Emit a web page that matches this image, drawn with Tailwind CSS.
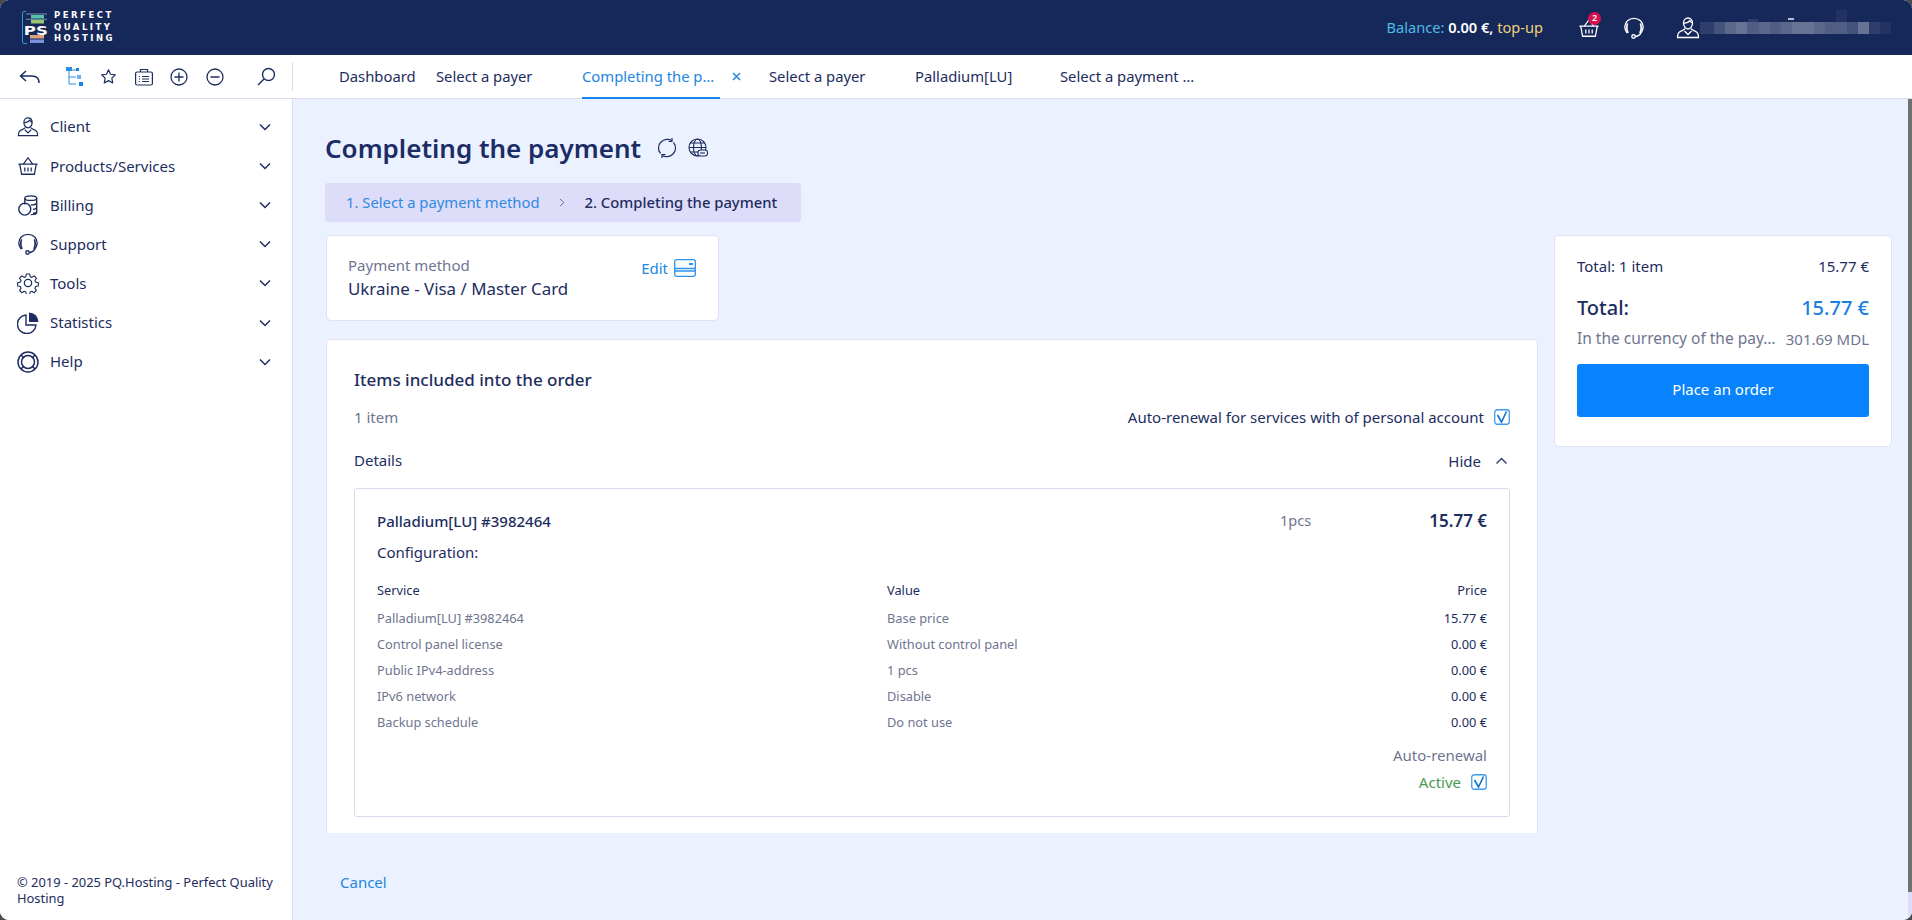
<!DOCTYPE html>
<html lang="en">
<head>
  <meta charset="UTF-8">
  <title>Completing the payment</title>
  <script src="https://cdn.jsdelivr.net/npm/@tailwindcss/browser@4"></script>
</head>
<body class="h-screen overflow-hidden bg-[#4a4a4a] font-['Noto_Sans',sans-serif] text-[15px] text-[#1d2d60]">
  <svg class="hidden">
    <symbol id="user" viewBox="0 0 24 24" fill="none" stroke="currentColor" stroke-width="1.300">
      <path d="M7.500 7c0-3 2-5 4.500-5s4.500 2 4.500 5-2 6-4.500 6-4.500-3-4.500-6z"/><path d="M7.500 7c3 .5 5-.5 6.500-2.500 .5 1 1.500 2 2.500 2.500"/>
      <path d="M9 12.500c-.5 2-5 2-6.500 4.500-.7 1.300-1 3-1 4.500h21c0-1.500-.3-3.200-1-4.500-1.500-2.500-6-2.500-6.500-4.500"/><path d="M8.500 15l3.500 3.500 3.500-3.500"/>
    </symbol>
    <symbol id="basket" viewBox="0 0 24 24" fill="none" stroke="currentColor" stroke-width="1.400" stroke-linejoin="round">
      <path d="M1.500 10h21M3 10l2 11h14l2-11"/><path d="M7 10l5-7 5 7"/><path d="M8.500 13.500v4.500M12 13.500v4.500M15.500 13.500v4.500"/>
    </symbol>
    <symbol id="headset" viewBox="0 0 24 24" fill="none" stroke="currentColor" stroke-width="1.500">
      <path d="M4.500 17.500C2.500 15 2 13 2 11 2 5.500 6.500 1.500 12 1.500S22 5.500 22 11c0 2-.5 4-2.500 6.500"/>
      <path d="M5 7c-1.200 3-1 7 .5 10.500M19 7c1.200 3 1 7-.5 10.500" stroke-width="1.800"/>
      <path d="M19.500 17.500c-1.500 2.500-3.500 3.500-6 3.800"/><circle cx="11.500" cy="21.300" r="1.900"/>
    </symbol>
    <symbol id="chev" viewBox="0 0 12 8" fill="none" stroke="currentColor" stroke-width="1.500"><path d="M1 1.500l5 5 5-5"/></symbol>
    <symbol id="check" viewBox="0 0 16 16" fill="none"><rect x=".75" y=".75" width="14.500" height="14.500" rx="2.500" stroke="#3d9bef" stroke-width="1.300"/><path d="M3.500 6l4 7 5-10.500" stroke="#1173c9" stroke-width="1.600"/></symbol>
  </svg>

  <div class="flex h-full flex-col overflow-hidden rounded-[9px] bg-white">
    <header class="flex h-[55px] shrink-0 items-center bg-[#16285a]">
      <div class="ml-[22px] flex items-center gap-[6px]">
        <svg class="h-[33px] w-[26px]" viewBox="0 0 26 33" fill="none">
          <path d="M4 .5H2Q.5.5.5 2v29q0 1.500 1.500 1.500h3" stroke="#2f9cc4"/>
          <rect x="4" y="2.500" width="21" height="1" fill="#7b8dac"/>
          <rect x="9" y="4" width="13" height="3.500" fill="#52c3a5"/>
          <rect x="9" y="9" width="13" height="3.500" fill="#96c66d"/>
          <rect x="4" y="7.800" width="21" height="1" fill="#7b8dac"/>
          <text x="1.800" y="24" font-family="DejaVu Sans" font-weight="700" font-size="13" textLength="24" lengthAdjust="spacingAndGlyphs" fill="#fff">PS</text>
          <rect x="8" y="24" width="14" height="3.500" fill="#dda27d"/>
          <rect x="8" y="28.500" width="14" height="3.500" fill="#7a90dd"/>
        </svg>
        <div class="font-['DejaVu_Sans',sans-serif] text-[8.500px] leading-[11.500px] font-bold tracking-[2.500px] text-white uppercase">
          <div>Perfect</div><div>Quality</div><div>Hosting</div>
        </div>
      </div>
      <div class="ml-auto flex items-center">
        <div class="text-[14.600px]"><span class="text-[#4cbde9]">Balance:</span> <span class="font-semibold text-white">0.00 €,</span> <span class="text-[#f0d277]">top-up</span></div>
        <div class="relative ml-[35px] text-white">
          <svg class="h-[22px] w-[22px]"><use href="#basket"/></svg>
          <span class="absolute top-[-5px] left-[10px] flex h-[13px] w-[13px] items-center justify-center rounded-full bg-[#d6104f] text-[9px] font-semibold text-white">2</span>
        </div>
        <svg class="ml-[23px] h-[22px] w-[22px] text-white"><use href="#headset"/></svg>
        <svg class="ml-[31px] h-[24px] w-[24px] text-white"><use href="#user"/></svg>
        <div class="relative mr-[16px] flex h-[12px] w-[196px]">
          <div class="w-[14px] bg-white/10"></div><div class="w-[11px] bg-white/20"></div><div class="w-[11px] bg-white/30"></div><div class="w-[11px] bg-white/35"></div><div class="w-[12px] bg-white/25"></div><div class="w-[11px] bg-white/30"></div><div class="w-[11px] bg-white/25"></div><div class="w-[11px] bg-white/30"></div><div class="w-[11px] bg-white/35"></div><div class="w-[11px] bg-white/35"></div><div class="w-[11px] bg-white/30"></div><div class="w-[11px] bg-white/25"></div><div class="w-[11px] bg-white/25"></div><div class="w-[11px] bg-white/20"></div><div class="w-[11px] bg-white/35"></div><div class="w-[11px] bg-white/10"></div><div class="w-[11px] bg-white/5"></div>
          <span class="absolute top-[-3px] left-[48px] h-[3px] w-[10px] bg-white/10"></span>
          <span class="absolute top-[-4px] left-[88px] h-[2px] w-[6px] bg-white/70"></span>
          <span class="absolute top-[-12px] left-[136px] h-[12px] w-[11px] bg-white/5"></span>
        </div>
      </div>
    </header>

    <div class="flex h-[44px] shrink-0 border-b border-[#d9dcee] bg-white">
      <div class="flex w-[292px] shrink-0 items-center">
        <svg class="ml-[19px] h-[16px] w-[21px]" viewBox="0 0 21 16" fill="none" stroke="#1d2d60" stroke-width="1.500"><path d="M20 14c0-5-3-7-7-7H2M7 2L1.500 7 7 12"/></svg>
        <svg class="ml-[25px] h-[20px] w-[19px]" viewBox="0 0 19 20" fill="none"><path d="M4 3h7M4 3v14h7M4 10h7" stroke="#2f8fe0"/><rect x="1" y="0" width="6" height="4" fill="#2f8fe0"/><rect x="11" y="1" width="3" height="3" fill="#1784ea"/><rect x="12" y="8" width="4" height="4" fill="#6fb1ee"/><rect x="14" y="15" width="4" height="4" fill="#1784ea"/></svg>
        <svg class="ml-[16px] h-[17px] w-[17px]" viewBox="0 0 24 24" fill="none" stroke="#1d2d60" stroke-width="1.700" stroke-linejoin="round"><path d="M12 2.500l2.900 6.300 6.800.8-5 4.700 1.300 6.800L12 17.800 6 21.100l1.300-6.800-5-4.700 6.800-.8z"/></svg>
        <svg class="ml-[18px] h-[18px] w-[18px]" viewBox="0 0 18 18" fill="none" stroke="#1d2d60" stroke-width="1.200"><rect x=".6" y="4" width="16.800" height="13" rx="1.500"/><path d="M5.500 4V1.500h7V4M7 8.500h7M7 11h7M7 13.500h7M4 8.500h1M4 11h1M4 13.500h1"/></svg>
        <svg class="ml-[17px] h-[18px] w-[18px]" viewBox="0 0 18 18" fill="none" stroke="#1d2d60" stroke-width="1.300"><circle cx="9" cy="9" r="8"/><path d="M9 4.500v9M4.500 9h9"/></svg>
        <svg class="ml-[18px] h-[18px] w-[18px]" viewBox="0 0 18 18" fill="none" stroke="#1d2d60" stroke-width="1.300"><circle cx="9" cy="9" r="8"/><path d="M4.500 9h9"/></svg>
        <svg class="ml-[33px] h-[19px] w-[19px]" viewBox="0 0 19 19" fill="none" stroke="#1d2d60" stroke-width="1.400"><circle cx="11.500" cy="7.500" r="6"/><path d="M7 12L1 18"/></svg>
      </div>
      <div class="my-[7px] w-px bg-[#d9dcee]"></div>
      <nav class="relative flex flex-1 items-center text-[14.800px]">
        <span class="ml-[46px] w-[97px]">Dashboard</span>
        <span class="w-[146px]">Select a payer</span>
        <span class="relative flex h-full w-[138px] items-center whitespace-nowrap text-[#2386e0]">Completing the p…<span class="absolute bottom-[-1px] left-0 h-[2px] w-full bg-[#1784ea]"></span></span>
        <svg class="ml-[12px] h-[9px] w-[9px]" viewBox="0 0 9 9" stroke="#2386e0" stroke-width="1.500"><path d="M1 1l7 7M8 1L1 8"/></svg>
        <span class="ml-[28px] w-[146px]">Select a payer</span>
        <span class="w-[145px]">Palladium[LU]</span>
        <span>Select a payment …</span>
      </nav>
    </div>

    <div class="flex min-h-0 flex-1">
      <aside class="flex w-[293px] shrink-0 flex-col border-r border-[#d9dcee] bg-white">
        <ul class="mt-[8px] flex flex-col">
          <li class="flex h-[39.200px] items-center">
            <svg class="ml-[17px] h-[22px] w-[22px]"><use href="#user"/></svg><span class="ml-[11px]">Client</span>
            <svg class="mr-[21px] ml-auto h-[8px] w-[12px]"><use href="#chev"/></svg>
          </li>
          <li class="flex h-[39.200px] items-center">
            <svg class="ml-[17px] h-[22px] w-[22px]"><use href="#basket"/></svg><span class="ml-[11px]">Products/Services</span>
            <svg class="mr-[21px] ml-auto h-[8px] w-[12px]"><use href="#chev"/></svg>
          </li>
          <li class="flex h-[39.200px] items-center">
            <svg class="ml-[17px] h-[22px] w-[22px]" viewBox="0 0 24 24" fill="none" stroke="currentColor" stroke-width="1.500"><ellipse cx="15" cy="4.500" rx="6.500" ry="2.500"/><path d="M8.500 4.500v7M21.500 4.500v16c0 1-3 2-6.500 2M21.500 9.500c0 1.300-3 2.500-6.500 2.500M21.500 14.500c0 1-1.500 2-4 2.300M21.500 19c0 1-1.500 1.800-4 2"/><circle cx="8.500" cy="16.500" r="6.500"/></svg><span class="ml-[11px]">Billing</span>
            <svg class="mr-[21px] ml-auto h-[8px] w-[12px]"><use href="#chev"/></svg>
          </li>
          <li class="flex h-[39.200px] items-center">
            <svg class="ml-[17px] h-[22px] w-[22px]"><use href="#headset"/></svg><span class="ml-[11px]">Support</span>
            <svg class="mr-[21px] ml-auto h-[8px] w-[12px]"><use href="#chev"/></svg>
          </li>
          <li class="flex h-[39.200px] items-center">
            <svg class="ml-[17px] h-[22px] w-[22px]" viewBox="0 0 24 24" fill="none" stroke="currentColor" stroke-width="1.400" stroke-linejoin="round"><circle cx="12" cy="12" r="4"/><path d="M10 1.500h4l.7 3.300 2 .9 2.800-1.800 2.800 2.800-1.800 2.800.9 2 3.300.7v4l-3.300.7-.9 2 1.800 2.800-2.800 2.800-2.800-1.800-2 .9-.7 3.300h-4l-.7-3.300-2-.9-2.800 1.800-2.800-2.800 1.800-2.800-.9-2-3.300-.7v-4l3.300-.7.9-2-1.800-2.800 2.800-2.800 2.800 1.800 2-.9z" transform="translate(1.300 .8) scale(.89)"/></svg><span class="ml-[11px]">Tools</span>
            <svg class="mr-[21px] ml-auto h-[8px] w-[12px]"><use href="#chev"/></svg>
          </li>
          <li class="flex h-[39.200px] items-center">
            <svg class="ml-[17px] h-[22px] w-[22px]" viewBox="0 0 22 22" fill="none" stroke="currentColor" stroke-width="1.400"><path d="M9 3a9.300 9.300 0 1 0 10 10H9z"/><path d="M12 .5a9.500 9.500 0 0 1 9.500 9.500H12z" fill="currentColor" stroke="none"/></svg><span class="ml-[11px]">Statistics</span>
            <svg class="mr-[21px] ml-auto h-[8px] w-[12px]"><use href="#chev"/></svg>
          </li>
          <li class="flex h-[39.200px] items-center">
            <svg class="ml-[17px] h-[22px] w-[22px]" viewBox="0 0 22 22" fill="none" stroke="currentColor" stroke-width="1.500"><circle cx="11" cy="11" r="10"/><circle cx="11" cy="11" r="6.500"/><path d="M4 4l3 3M18 4l-3 3M4 18l3-3M18 18l-3-3"/></svg><span class="ml-[11px]">Help</span>
            <svg class="mr-[21px] ml-auto h-[8px] w-[12px]"><use href="#chev"/></svg>
          </li>
        </ul>
        <p class="mt-auto mb-[14px] ml-[17px] w-[270px] text-[12.900px] leading-[16px]">© 2019 - 2025 PQ.Hosting - Perfect Quality Hosting</p>
      </aside>

      <main class="relative flex min-w-0 flex-1 flex-col bg-[#ebf1fe]">
        <div class="absolute top-0 right-0 h-full w-[4px] bg-[#dddcf9]">
          <div class="h-[793px] w-full bg-[#707070]"></div>
        </div>
        <div class="min-h-0 flex-1 overflow-hidden pl-[33px]">
          <div class="mt-[31px] flex h-[36px] items-center">
            <h1 class="-ml-px text-[26px] font-semibold text-[#1b2c66]">Completing the payment</h1>
            <svg class="ml-[16px] h-[20px] w-[20px]" viewBox="0 0 20 20" fill="none" stroke="currentColor" stroke-width="1.200"><path d="M3.500 15.500C.5 12 1 7 4 4s8-3.500 10.500-1.500M16.500 4.500c3 3.500 2.500 8.500-.5 11.500s-8 3.500-10.500 1.500"/><path d="M15 0v3.500h-3.500M5 20v-3.500h3.500"/></svg>
            <svg class="ml-[11px] h-[20px] w-[20px]" viewBox="0 0 20 20" fill="none" stroke="currentColor" stroke-width="1.100"><circle cx="9.500" cy="9.500" r="8.500"/><ellipse cx="9.500" cy="9.500" rx="4" ry="8.500"/><path d="M1 9.500h17M2 5h15M2 14h15"/><rect x="10" y="12" width="9.500" height="6" rx="2.500" fill="#ebf1fe"/><path d="M12 15h5"/></svg>
          </div>
          <div class="mt-[17px] flex h-[39px] w-[476px] -translate-x-px items-center rounded-[3px] bg-[#dddcf9] pl-[21px] text-[14.800px]">
            <span class="text-[#2f8ae0]">1. Select a payment method</span>
            <svg class="ml-[19px] h-[9px] w-[6px]" viewBox="0 0 6 9" fill="none" stroke="#6c7290"><path d="M1 1l4 3.500L1 8"/></svg>
            <span class="ml-[20px] font-medium">2. Completing the payment</span>
          </div>
          <div class="mt-[13px] flex items-start gap-[16px]">
            <div class="w-[1212px] shrink-0">
              <div class="flex h-[86px] w-[393px] justify-between rounded-[5px] border border-[#e0e2f3] bg-white pt-[18px] pr-[22px] pl-[21px]">
                <div>
                  <div class="h-[22px] text-[15px] leading-[22px] text-[#6f7590]">Payment method</div>
                  <div class="mt-[1px] text-[16.900px] leading-[24px]">Ukraine - Visa / Master Card</div>
                </div>
                <div class="mt-[2px] flex h-[24px] items-center text-[#2386e0]">
                  Edit
                  <svg class="ml-[6px] h-[18px] w-[22px]" viewBox="0 0 22 18" fill="none" stroke="#2c92ea" stroke-width="1.300"><rect x=".7" y=".7" width="20.600" height="16.600" rx="2"/><path d="M1 9.500h20M1 12h20" stroke-width="1.500"/><path d="M15 5h4" stroke-width="2"/></svg>
                </div>
              </div>
              <div class="mt-[18px] rounded-t-[5px] border-x border-t border-[#e0e2f3] bg-white pr-[27px] pl-[27px]">
                <div class="pt-[28px]">
                  <h2 class="h-[24px] text-[17px] leading-[24px] font-medium">Items included into the order</h2>
                  <div class="mt-[13px] flex h-[24px] items-center justify-between">
                    <span class="text-[#6f7590]">1 item</span>
                    <span class="flex items-center">Auto-renewal for services with of personal account<svg class="ml-[10px] h-[16px] w-[16px]"><use href="#check"/></svg></span>
                  </div>
                  <div class="mt-[20px] flex h-[24px] items-center justify-between">
                    <span class="pb-[2px]">Details</span>
                    <span class="flex items-center">Hide<svg class="mr-[2px] ml-[14px] h-[8px] w-[13px] rotate-180 text-[#3a4872]"><use href="#chev"/></svg></span>
                  </div>
                </div>
                <div class="mt-[15px] rounded-[3px] border border-[#d9dcee] px-[22px] pt-[20px] pb-[22px]">
                  <div class="flex h-[24px] items-center">
                    <span class="w-[903px] text-[15px] font-medium">Palladium[LU] #3982464</span>
                    <span class="text-[14.500px] text-[#6f7590]">1pcs</span>
                    <span class="ml-auto text-[17px] font-semibold">15.77 €</span>
                  </div>
                  <div class="mt-[7px] h-[24px] text-[15px] leading-[24px]">Configuration:</div>
                  <div class="mt-[15px] grid h-[24px] grid-cols-[510px_1fr_auto] items-center text-[12.800px]"><span>Service</span><span>Value</span><span>Price</span></div>
                  <div class="mt-[2px] grid grid-cols-[510px_1fr_auto] text-[12.800px] leading-[26px] text-[#6f7590]">
                    <span>Palladium[LU] #3982464</span><span>Base price</span><span class="text-[#1d2d60]">15.77 €</span>
                    <span>Control panel license</span><span>Without control panel</span><span class="text-right text-[#1d2d60]">0.00 €</span>
                    <span>Public IPv4-address</span><span>1 pcs</span><span class="text-right text-[#1d2d60]">0.00 €</span>
                    <span>IPv6 network</span><span>Disable</span><span class="text-right text-[#1d2d60]">0.00 €</span>
                    <span>Backup schedule</span><span>Do not use</span><span class="text-right text-[#1d2d60]">0.00 €</span>
                  </div>
                  <div class="mt-[8px] h-[24px] text-right leading-[24px] text-[#6f7590]">Auto-renewal</div>
                  <div class="mt-[3px] flex h-[24px] items-center justify-end text-[#4a9a52]">Active<svg class="ml-[10px] h-[16px] w-[16px]"><use href="#check"/></svg></div>
                </div>
                <div class="h-[40px]"></div>
              </div>
            </div>
            <div class="h-[212px] w-[338px] rounded-[5px] border border-[#e0e2f3] bg-white px-[22px] pt-[19px]">
              <div class="flex h-[22px] items-center justify-between text-[15px]"><span>Total: 1 item</span><span>15.77 €</span></div>
              <div class="mt-[18px] flex h-[26px] items-center justify-between text-[20px] font-medium"><span>Total:</span><span class="text-[#1a7fe0]">15.77 €</span></div>
              <div class="mt-[7px] flex h-[22px] items-center justify-between text-[15px] text-[#6f7590]"><span class="text-[15.500px]">In the currency of the pay…</span><span>301.69 MDL</span></div>
              <button class="mt-[14px] flex h-[53px] w-full items-center justify-center rounded-[3px] bg-[#0883fd] pb-[2px] text-[15px] text-white">Place an order</button>
            </div>
          </div>
        </div>
        <div class="flex h-[87px] shrink-0 items-start pt-[38px] pl-[47px] text-[#2386e0]">Cancel</div>
      </main>
    </div>
  </div>
</body>
</html>
